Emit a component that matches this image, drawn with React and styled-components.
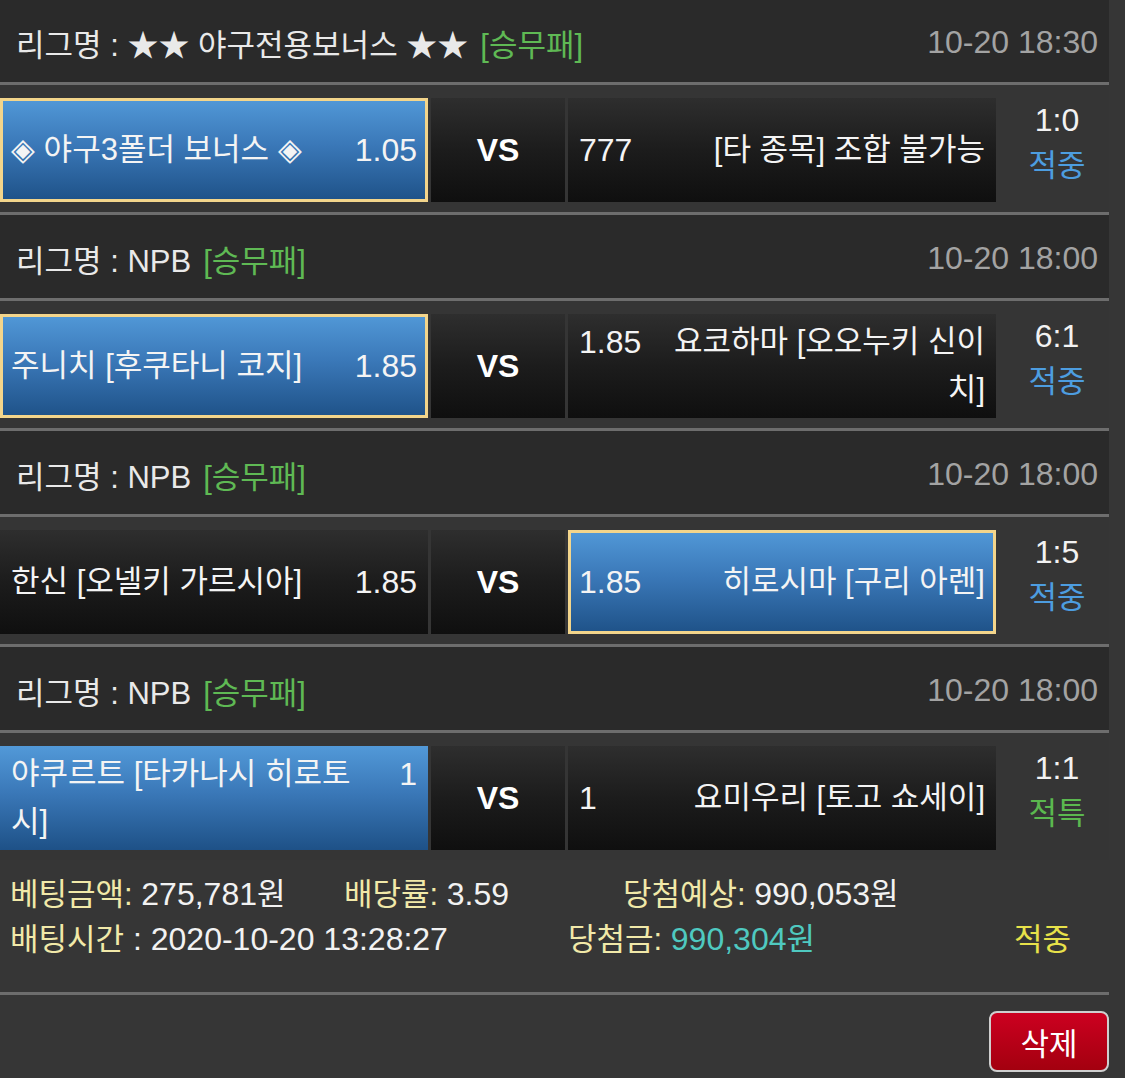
import React from "react";
import styled, { createGlobalStyle } from "styled-components";

const GlobalStyle = createGlobalStyle`
  html, body {
    margin: 0;
    padding: 0;
    background: #363636;
  }
  body {
    font-family: "Liberation Sans", "Noto Sans CJK KR", sans-serif;
    color: #ececec;
  }
`;

const Page = styled.div`
  width: 1125px;
  min-height: 1078px;
  overflow: hidden;
  background: #363636;
`;

const List = styled.div`
  width: 1109px;
  margin-top: -1px;
`;

const LeagueHeader = styled.div`
  display: flex;
  align-items: center;
  justify-content: space-between;
  box-sizing: border-box;
  height: 83px;
  padding: 3px 11px 0 16px;
  background: #2a2a2a;
`;

const LeagueName = styled.div`
  font-size: 31px;
  color: #e9e9e9;
  white-space: pre;
`;

const Tag = styled.span`
  color: #5fb954;
  margin-left: 12px;
`;

const Time = styled.div`
  font-size: 32px;
  color: #a3a3a3;
`;

const Divider = styled.div`
  height: 3px;
  background: #6d6d6d;
`;

const BetRow = styled.div`
  display: grid;
  grid-template-columns: 428px 134px 428px 1fr;
  column-gap: 3px;
  box-sizing: border-box;
  height: 127px;
  padding: 13px 0 10px;
  background: #353535;
`;

const Cell = styled.div`
  display: flex;
  align-items: center;
  box-sizing: border-box;
  height: 104px;
  padding: 0 8px;
  border: 3px solid ${(p) => (p.$selected ? "#f3d58b" : "transparent")};
  background-origin: border-box;
  background-image: ${(p) =>
    p.$picked
      ? "linear-gradient(180deg, #5299d8 0%, #3a78b8 45%, #1e5187 100%)"
      : "linear-gradient(180deg, #2e2e2e 0%, #1c1c1c 50%, #0f0f0f 100%)"};
  color: #f4f4f4;
`;

const CellContent = styled.div`
  display: flex;
  align-items: flex-start;
  justify-content: space-between;
  width: 100%;
`;

const TeamName = styled.div`
  max-width: 343px;
  font-size: 31px;
  line-height: 48px;
  text-align: ${(p) => (p.$side === "away" ? "right" : "left")};
`;

const Odds = styled.div`
  flex-shrink: 0;
  font-size: 32px;
  line-height: 48px;
`;

const VsCell = styled.div`
  display: flex;
  align-items: center;
  justify-content: center;
  height: 104px;
  background-image: linear-gradient(180deg, #2e2e2e 0%, #1c1c1c 50%, #0f0f0f 100%);
  color: #ffffff;
  font-size: 32px;
  font-weight: bold;
`;

const ScoreCell = styled.div`
  display: flex;
  flex-direction: column;
  align-items: center;
  justify-content: center;
  box-sizing: border-box;
  height: 104px;
  padding: 0 0 14px 6px;
`;

const Score = styled.div`
  font-size: 32px;
  line-height: 46px;
  color: #f2f2f2;
`;

const Result = styled.div`
  font-size: 31px;
  line-height: 46px;
  color: ${(p) => p.$color};
`;

const Summary = styled.div`
  box-sizing: border-box;
  padding: 12px 0 30px 10px;
  background: #363636;
`;

const FooterLine = styled.div`
  display: grid;
  grid-template-columns: ${(p) => p.$cols};
  align-items: center;
  height: 45px;
  line-height: 45px;
  white-space: pre;
`;

const Label = styled.span`
  font-size: 31px;
  color: ${(p) => p.$color || "#f1e9a9"};
`;

const Value = styled.span`
  font-size: 32px;
  color: ${(p) => p.$color || "#f2f2f2"};
`;

const Actions = styled.div`
  display: flex;
  justify-content: flex-end;
  box-sizing: border-box;
  height: 83px;
  padding-top: 16px;
`;

const DeleteButton = styled.button`
  box-sizing: border-box;
  width: 120px;
  height: 61px;
  border: 2px solid #cfcfcf;
  border-radius: 8px;
  background: linear-gradient(180deg, #cc0020 0%, #a3000f 100%);
  color: #ffffff;
  font-family: inherit;
  font-size: 31px;
  padding: 0;
  cursor: pointer;
`;

const BLUE = "#4d9de0";
const GREEN = "#5bb84f";

const games = [
  {
    league: "★★ 야구전용보너스 ★★",
    time: "10-20 18:30",
    home: { name: "◈ 야구3폴더 보너스 ◈", odds: "1.05" },
    away: { name: "[타 종목] 조합 불가능", odds: "777" },
    pick: "home",
    border: true,
    score: "1:0",
    result: "적중",
    resultColor: BLUE,
  },
  {
    league: "NPB",
    time: "10-20 18:00",
    home: { name: "주니치 [후쿠타니 코지]", odds: "1.85" },
    away: { name: "요코하마 [오오누키 신이치]", odds: "1.85" },
    pick: "home",
    border: true,
    score: "6:1",
    result: "적중",
    resultColor: BLUE,
  },
  {
    league: "NPB",
    time: "10-20 18:00",
    home: { name: "한신 [오넬키 가르시아]", odds: "1.85" },
    away: { name: "히로시마 [구리 아렌]", odds: "1.85" },
    pick: "away",
    border: true,
    score: "1:5",
    result: "적중",
    resultColor: BLUE,
  },
  {
    league: "NPB",
    time: "10-20 18:00",
    home: { name: "야쿠르트 [타카나시 히로토시]", odds: "1" },
    away: { name: "요미우리 [토고 쇼세이]", odds: "1" },
    pick: "home",
    border: false,
    score: "1:1",
    result: "적특",
    resultColor: GREEN,
  },
];

function Game({ game, last }) {
  const homePicked = game.pick === "home";
  const awayPicked = game.pick === "away";
  return (
    <>
      <LeagueHeader>
        <LeagueName>
          리그명 : {game.league}
          <Tag>[승무패]</Tag>
        </LeagueName>
        <Time>{game.time}</Time>
      </LeagueHeader>
      <Divider />
      <BetRow>
        <Cell $picked={homePicked} $selected={homePicked && game.border}>
          <CellContent>
            <TeamName $side="home">{game.home.name}</TeamName>
            <Odds>{game.home.odds}</Odds>
          </CellContent>
        </Cell>
        <VsCell>VS</VsCell>
        <Cell $picked={awayPicked} $selected={awayPicked && game.border}>
          <CellContent>
            <Odds>{game.away.odds}</Odds>
            <TeamName $side="away">{game.away.name}</TeamName>
          </CellContent>
        </Cell>
        <ScoreCell>
          <Score>{game.score}</Score>
          <Result $color={game.resultColor}>{game.result}</Result>
        </ScoreCell>
      </BetRow>
      {!last && <Divider />}
    </>
  );
}

export default function App() {
  return (
    <Page>
      <GlobalStyle />
      <List>
        {games.map((g, i) => (
          <Game key={i} game={g} last={i === games.length - 1} />
        ))}
        <Summary>
          <FooterLine $cols="334px 279px 1fr">
            <span>
              <Label>베팅금액: </Label>
              <Value>275,781</Value>
              <Label $color="#f2f2f2">원</Label>
            </span>
            <span>
              <Label>배당률: </Label>
              <Value>3.59</Value>
            </span>
            <span>
              <Label>당첨예상: </Label>
              <Value>990,053</Value>
              <Label $color="#f2f2f2">원</Label>
            </span>
          </FooterLine>
          <FooterLine $cols="558px 446px 1fr">
            <span>
              <Label>배팅시간</Label>
              <Value> : 2020-10-20 13:28:27</Value>
            </span>
            <span>
              <Label>당첨금: </Label>
              <Value $color="#4fc9c0">990,304</Value>
              <Label $color="#4fc9c0">원</Label>
            </span>
            <span>
              <Label $color="#e8e24a">적중</Label>
            </span>
          </FooterLine>
        </Summary>
        <Divider />
        <Actions>
          <DeleteButton type="button">삭제</DeleteButton>
        </Actions>
      </List>
    </Page>
  );
}
